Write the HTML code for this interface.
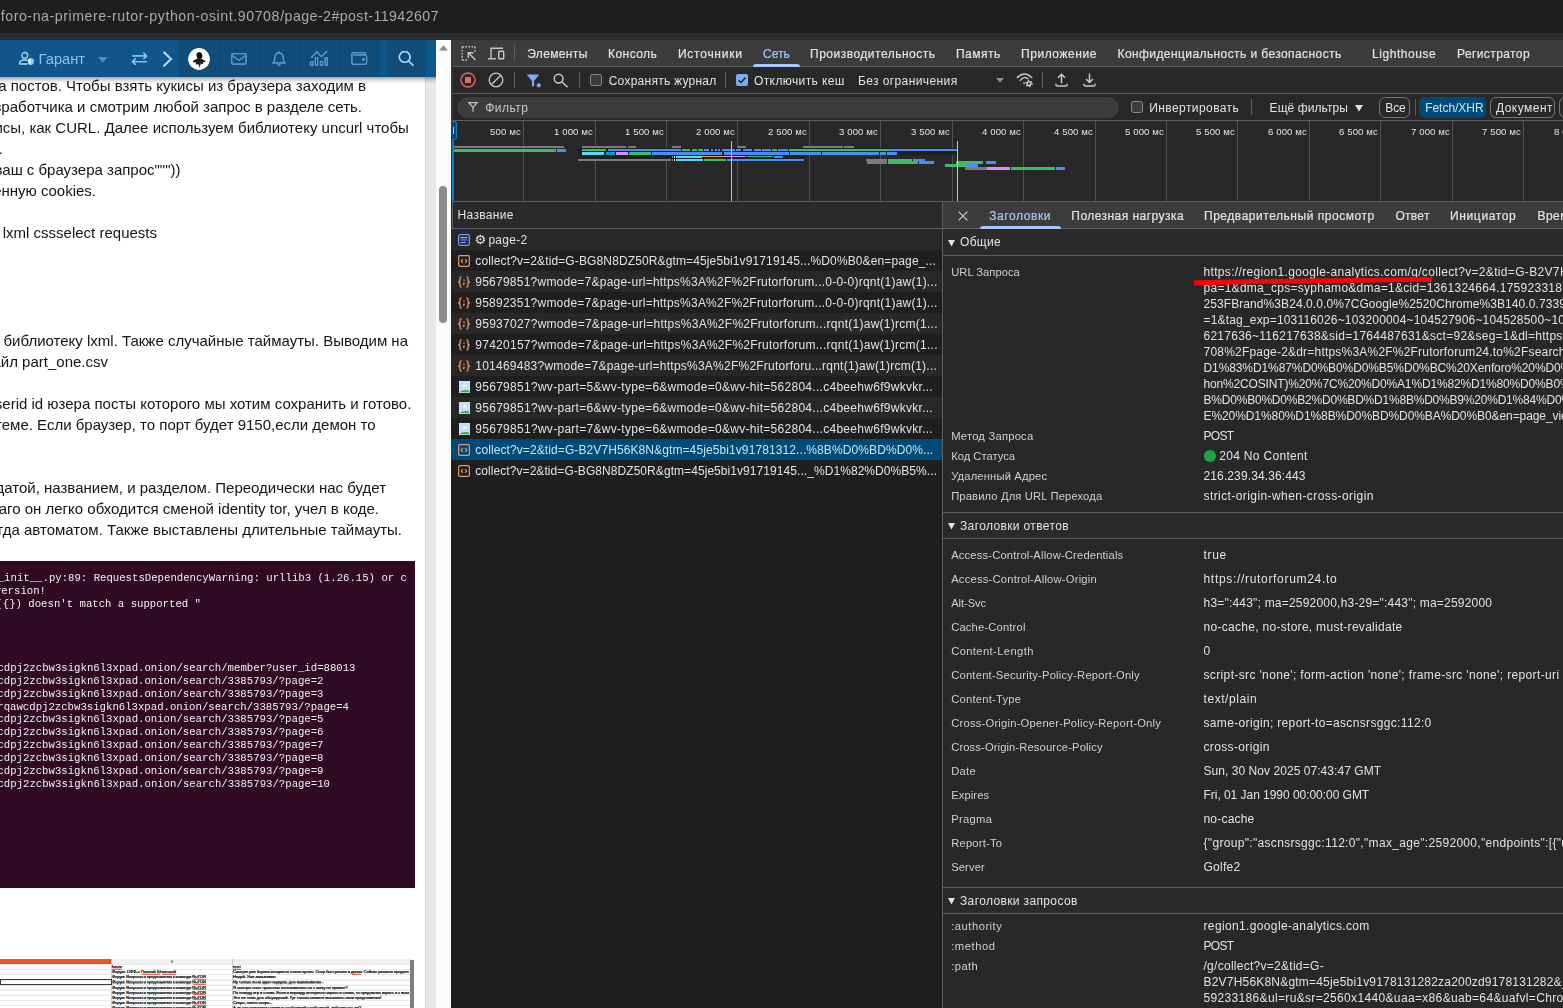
<!DOCTYPE html>
<html><head><meta charset="utf-8"><title>page</title>
<style>
html,body{margin:0;padding:0;}
body{width:1563px;height:1008px;overflow:hidden;position:relative;background:#282828;font-family:"Liberation Sans",sans-serif;}
#root{position:absolute;left:0;top:0;width:1563px;height:1008px;overflow:hidden;}
#root div,#root span,#root svg{position:absolute;}
#root span{white-space:pre;}
#tx{left:0;top:0;width:1563px;height:1008px;will-change:transform;}

</style></head><body><div id="root">
<div style="left:0px;top:0px;width:1563px;height:33px;background:#1e1e1e;"></div>
<div style="left:0px;top:33px;width:1563px;height:7px;background:#292c31;"></div>
<div style="left:0px;top:40px;width:452px;height:968px;background:#ffffff;"></div>
<div style="left:425.2px;top:77px;width:10.8px;height:931px;background:#e9e9e9;border-left:0.8px solid #d6d6d6;box-sizing:border-box;"></div>
<div style="left:435.9px;top:40px;width:15.5px;height:968px;background:#fcfcfc;"></div>
<div style="left:439.2px;top:186px;width:8.3px;height:136.6px;background:#8b8b8b;border-radius:4.2px;"></div>
<svg style="left:439px;top:44.9px" width="9" height="6" viewBox="0 0 9 6"><path d="M0 5.4 L4.45 0.3 L8.9 5.4Z" fill="#8b8b8b"/></svg>
<div style="left:0px;top:561px;width:415px;height:326.5px;background:#300a24;"></div>
<div style="left:0px;top:76.5px;width:436px;height:7px;background:transparent;background:linear-gradient(rgba(0,0,0,.36),rgba(0,0,0,.20) 30%,rgba(0,0,0,.07) 65%,rgba(0,0,0,0));"></div>
<div style="left:0px;top:40px;width:436px;height:36.5px;background:#0f568a;"></div>
<div style="left:178px;top:40px;width:201.5px;height:36.5px;background:#114d7a;"></div>
<div style="left:219px;top:40px;width:1px;height:36.5px;background:#0c456f;"></div>
<div style="left:259px;top:40px;width:1px;height:36.5px;background:#0c456f;"></div>
<div style="left:299px;top:40px;width:1px;height:36.5px;background:#0c456f;"></div>
<div style="left:339px;top:40px;width:1px;height:36.5px;background:#0c456f;"></div>
<div style="left:386.5px;top:40px;width:39.5px;height:36.5px;background:#114d7a;border-radius:4px 4px 0 0;"></div>
<div style="left:452px;top:40px;width:1111px;height:968px;background:#282828;"></div>
<div style="left:451.3px;top:40px;width:1.7px;height:162px;background:#383838;"></div>
<div style="left:451.3px;top:40px;width:1111.7px;height:26px;background:#3c3c3c;"></div>
<div style="left:453px;top:66px;width:1110px;height:1px;background:#5e5e5e;"></div>
<div style="left:453px;top:93px;width:1110px;height:1px;background:#5e5e5e;"></div>
<div style="left:457px;top:97px;width:662px;height:20.5px;background:#3c3c3c;border-radius:10.5px;"></div>
<div style="left:453px;top:120px;width:1110px;height:1px;background:#5e5e5e;"></div>
<div style="left:753px;top:64px;width:47px;height:3px;background:#a8c7fa;border-radius:3px 3px 0 0;"></div>
<div style="left:1379px;top:97px;width:31px;height:20.5px;background:transparent;border:1px solid #757575;box-sizing:border-box;border-radius:6px;"></div>
<div style="left:1419px;top:97px;width:67px;height:20.5px;background:#004a77;border-radius:6px;"></div>
<div style="left:1490px;top:97px;width:64.5px;height:20.5px;background:transparent;border:1px solid #757575;box-sizing:border-box;border-radius:6px;"></div>
<div style="left:1559px;top:97px;width:20px;height:20.5px;background:transparent;border:1px solid #757575;box-sizing:border-box;border-radius:6px;"></div>
<div style="left:514px;top:45px;width:1px;height:16px;background:#5e5e5e;"></div>
<div style="left:514px;top:72px;width:1px;height:16px;background:#5e5e5e;"></div>
<div style="left:579px;top:72px;width:1px;height:16px;background:#5e5e5e;"></div>
<div style="left:725px;top:72px;width:1px;height:16px;background:#5e5e5e;"></div>
<div style="left:1042px;top:72px;width:1px;height:16px;background:#5e5e5e;"></div>
<div style="left:1250.5px;top:99px;width:1px;height:16px;background:#5e5e5e;"></div>
<div style="left:1414.5px;top:99px;width:1px;height:16px;background:#5e5e5e;"></div>
<div style="left:590px;top:74px;width:12px;height:12px;background:#3c3c3c;border:1px solid #8f8f8f;box-sizing:border-box;border-radius:2.5px;"></div>
<svg style="left:736px;top:74px" width="12" height="12" viewBox="0 0 12 12"><rect width="12" height="12" rx="2" fill="#7cacf8"/><path d="M2.6 6.2 L4.9 8.5 L9.6 3.4" fill="none" stroke="#1f1f1f" stroke-width="1.5"/></svg>
<div style="left:1131px;top:101px;width:12px;height:12px;background:#3c3c3c;border:1px solid #8f8f8f;box-sizing:border-box;border-radius:2.5px;"></div>
<svg style="left:996px;top:78px" width="8" height="5" viewBox="0 0 8 5"><path d="M0 0 H8 L4 4.5Z" fill="#8f8f8f"/></svg>
<svg style="left:1354.5px;top:105px" width="8" height="7" viewBox="0 0 8 7"><path d="M0 0 H8 L4 6.5Z" fill="#e3e3e3"/></svg>
<svg style="left:460.6px;top:45.6px" width="16" height="15" viewBox="0 0 16 15" fill="none" stroke="#c7c7c7">
<path d="M1.2 0.8 H14 " stroke-width="1.4" stroke-dasharray="1.6 1.5"/>
<path d="M1.2 14 H6" stroke-width="1.4" stroke-dasharray="1.6 1.5"/>
<path d="M1.2 0.8 V14" stroke-width="1.4" stroke-dasharray="1.6 1.5"/>
<path d="M14 0.8 V6" stroke-width="1.4" stroke-dasharray="1.6 1.5"/>
<path d="M14.5 14 L7.3 6.8 M7.3 12 V6.8 H12.5" stroke-width="1.4"/></svg>
<svg style="left:488px;top:46.5px" width="17" height="13" viewBox="0 0 17 13" fill="none" stroke="#c7c7c7" stroke-width="1.4">
<path d="M3 11 V1.2 H15"/><path d="M0 11.8 H8"/><rect x="10.7" y="4.2" width="5" height="7.6" rx="0.8"/></svg>
<svg style="left:460px;top:72px" width="16" height="16" viewBox="0 0 16 16"><circle cx="8" cy="8" r="7" fill="none" stroke="#e46962" stroke-width="1.3"/><rect x="5" y="5" width="6" height="6" rx="0.6" fill="#e46962"/></svg>
<svg style="left:488px;top:72px" width="16" height="16" viewBox="0 0 16 16" fill="none" stroke="#c7c7c7" stroke-width="1.3"><circle cx="8" cy="8" r="6.8"/><path d="M3.2 12.8 L12.8 3.2"/></svg>
<svg style="left:526px;top:73.5px" width="16" height="14" viewBox="0 0 16 14"><path d="M0.8 0.5 H13.2 L8.1 7 V12.3 H5.9 V7Z" fill="#7cacf8"/><circle cx="12.8" cy="11.3" r="2.1" fill="#7cacf8"/></svg>
<svg style="left:553px;top:73px" width="16" height="15" viewBox="0 0 16 15" fill="none" stroke="#c7c7c7" stroke-width="1.5"><circle cx="5.6" cy="5.6" r="4.4"/><path d="M8.8 8.8 L14.6 14.2"/></svg>
<svg style="left:468px;top:102px" width="10" height="10" viewBox="0 0 10 10" fill="none" stroke="#c7c7c7" stroke-width="1.2"><path d="M0.8 0.7 H9.2 L5 5.4 Z M5 5.4 V9.8"/></svg>
<svg style="left:1015.5px;top:72.5px" width="18" height="15" viewBox="0 0 18 15" fill="none" stroke="#c7c7c7" stroke-width="1.4">
<path d="M0.8 4.9 Q8.5 -2.8 16.2 4.9"/><path d="M3.8 7.7 Q8.3 2.2 12.4 6.2"/><path d="M6.6 10 L8.6 9 V11.6Z" fill="#c7c7c7" stroke="none"/>
<circle cx="13" cy="10.6" r="1.9" stroke-width="1.5"/><circle cx="13" cy="10.6" r="3.1" stroke-width="1.3" stroke-dasharray="1.5 1.75"/></svg>
<svg style="left:1054.5px;top:72.5px" width="13" height="14" viewBox="0 0 13 14" fill="none" stroke="#c7c7c7" stroke-width="1.5"><path d="M6.5 10.2 V1.4 M3 4.8 L6.5 1.3 L10 4.8"/><path d="M0.9 10.8 V11.4 Q0.9 13 2.5 13 H10.5 Q12.1 13 12.1 11.4 V10.8"/></svg>
<svg style="left:1082.5px;top:72.5px" width="13" height="14" viewBox="0 0 13 14" fill="none" stroke="#c7c7c7" stroke-width="1.5"><path d="M6.5 0.6 V9.4 M3 6 L6.5 9.5 L10 6"/><path d="M0.9 10.8 V11.4 Q0.9 13 2.5 13 H10.5 Q12.1 13 12.1 11.4 V10.8"/></svg>
<div style="left:453px;top:121px;width:1110px;height:80px;background:#282828;"></div>
<div style="left:523px;top:121px;width:1px;height:80px;background:#525252;"></div>
<div style="left:595px;top:121px;width:1px;height:80px;background:#525252;"></div>
<div style="left:666px;top:121px;width:1px;height:80px;background:#525252;"></div>
<div style="left:737px;top:121px;width:1px;height:80px;background:#525252;"></div>
<div style="left:809px;top:121px;width:1px;height:80px;background:#525252;"></div>
<div style="left:880px;top:121px;width:1px;height:80px;background:#525252;"></div>
<div style="left:952px;top:121px;width:1px;height:80px;background:#525252;"></div>
<div style="left:1023px;top:121px;width:1px;height:80px;background:#525252;"></div>
<div style="left:1095px;top:121px;width:1px;height:80px;background:#525252;"></div>
<div style="left:1166px;top:121px;width:1px;height:80px;background:#525252;"></div>
<div style="left:1237px;top:121px;width:1px;height:80px;background:#525252;"></div>
<div style="left:1309px;top:121px;width:1px;height:80px;background:#525252;"></div>
<div style="left:1380px;top:121px;width:1px;height:80px;background:#525252;"></div>
<div style="left:1452px;top:121px;width:1px;height:80px;background:#525252;"></div>
<div style="left:1523px;top:121px;width:1px;height:80px;background:#525252;"></div>
<div style="left:453px;top:201px;width:1110px;height:1px;background:#5e5e5e;"></div>
<div style="left:577.5px;top:148.4px;width:380px;height:6.9px;background:#1f1f1f;"></div>
<div style="left:577.5px;top:155.2px;width:227px;height:6.2px;background:#1f1f1f;"></div>
<div style="left:453.6px;top:146.1px;width:110.2px;height:2px;background:#7c7c7c;"></div>
<div style="left:582px;top:146.1px;width:43.5px;height:2px;background:#7c7c7c;"></div>
<div style="left:627.5px;top:146.1px;width:8.5px;height:2px;background:#7c7c7c;"></div>
<div style="left:672px;top:146.1px;width:9px;height:2px;background:#7c7c7c;"></div>
<div style="left:737.6px;top:146.1px;width:8.4px;height:2px;background:#7c7c7c;"></div>
<div style="left:802.5px;top:146.1px;width:40.5px;height:2px;background:#7c7c7c;"></div>
<div style="left:843.8px;top:146.1px;width:10.2px;height:2px;background:#7c7c7c;"></div>
<div style="left:453.6px;top:149px;width:102.4px;height:2.9px;background:#3cbd63;"></div>
<div style="left:557px;top:149px;width:9px;height:2.9px;background:#4b8cf5;"></div>
<div style="left:582px;top:149.1px;width:23.6px;height:2.3px;background:#3cbd63;"></div>
<div style="left:607.5px;top:149.1px;width:73.5px;height:2.3px;background:#4b8cf5;"></div>
<div style="left:682px;top:149.1px;width:8px;height:2.3px;background:#3cbd63;"></div>
<div style="left:691.5px;top:149.1px;width:5.5px;height:2.3px;background:#3cbd63;"></div>
<div style="left:698px;top:149.1px;width:5px;height:2.3px;background:#3cbd63;"></div>
<div style="left:704px;top:149.1px;width:5px;height:2.3px;background:#4b8cf5;"></div>
<div style="left:710.5px;top:149.1px;width:2.5px;height:2.3px;background:#4b8cf5;"></div>
<div style="left:714.5px;top:149.1px;width:2.5px;height:2.3px;background:#4b8cf5;"></div>
<div style="left:718px;top:149.1px;width:2px;height:2.3px;background:#4b8cf5;"></div>
<div style="left:722px;top:149.1px;width:13px;height:2.3px;background:#4b8cf5;"></div>
<div style="left:736px;top:149.1px;width:5px;height:2.3px;background:#4b8cf5;"></div>
<div style="left:742.5px;top:149.1px;width:9.5px;height:2.3px;background:#4b8cf5;"></div>
<div style="left:753.5px;top:149.1px;width:7.5px;height:2.3px;background:#4b8cf5;"></div>
<div style="left:762px;top:149.1px;width:9px;height:2.3px;background:#4b8cf5;"></div>
<div style="left:771.5px;top:149.1px;width:5.5px;height:2.3px;background:#3cbd63;"></div>
<div style="left:778px;top:149.1px;width:10px;height:2.3px;background:#4b8cf5;"></div>
<div style="left:789px;top:149.1px;width:97.5px;height:2.3px;background:#3cbd63;"></div>
<div style="left:886.8px;top:149.1px;width:70.2px;height:2.3px;background:#4b8cf5;"></div>
<div style="left:582px;top:152.3px;width:22px;height:2.5px;background:#5cd3f8;"></div>
<div style="left:605.6px;top:152.3px;width:9.4px;height:2.5px;background:#08a0c0;"></div>
<div style="left:616px;top:152.3px;width:12px;height:2.5px;background:#dc8ff8;"></div>
<div style="left:628.7px;top:152.3px;width:22.3px;height:2.5px;background:#3cbd63;"></div>
<div style="left:651.8px;top:152.3px;width:70.2px;height:2.5px;background:#4b8cf5;"></div>
<div style="left:724px;top:152.3px;width:65px;height:2.5px;background:#4b8cf5;"></div>
<div style="left:790px;top:152.3px;width:31px;height:2.5px;background:#4b8cf5;"></div>
<div style="left:822px;top:152.3px;width:56.7px;height:2.5px;background:#4b8cf5;"></div>
<div style="left:879.6px;top:152.3px;width:6.4px;height:2.5px;background:#4b8cf5;"></div>
<div style="left:886.8px;top:152.3px;width:10.4px;height:2.5px;background:#4b8cf5;"></div>
<div style="left:676px;top:155.8px;width:25.6px;height:1.9px;background:#5cd3f8;"></div>
<div style="left:774px;top:155.8px;width:9px;height:1.9px;background:#4b8cf5;"></div>
<div style="left:702px;top:156.0px;width:21.5px;height:1.3px;background:#e9a600;"></div>
<div style="left:724px;top:156.0px;width:22px;height:1.3px;background:#dc8ff8;"></div>
<div style="left:747px;top:156.0px;width:26px;height:1.3px;background:#3cbd63;"></div>
<div style="left:578px;top:158.6px;width:93px;height:2.3px;background:#7c7c7c;"></div>
<div style="left:676px;top:158.6px;width:27px;height:2.3px;background:#5cd3f8;"></div>
<div style="left:704px;top:158.6px;width:22px;height:2.3px;background:#3cbd63;"></div>
<div style="left:727px;top:158.6px;width:76.6px;height:2.3px;background:#4b8cf5;"></div>
<div style="left:866px;top:158.6px;width:20.8px;height:2.3px;background:#7c7c7c;"></div>
<div style="left:888.3px;top:158.6px;width:23.7px;height:2.3px;background:#3cbd63;"></div>
<div style="left:912.8px;top:158.6px;width:12.2px;height:2.3px;background:#4b8cf5;"></div>
<div style="left:674.2px;top:155.8px;width:1.1px;height:2.1px;background:#f0f0f0;"></div>
<div style="left:672px;top:155.8px;width:0.6px;height:2.1px;background:#8a8a8a;"></div>
<div style="left:674.2px;top:158.6px;width:1.1px;height:2.1px;background:#f0f0f0;"></div>
<div style="left:672px;top:158.6px;width:0.6px;height:2.1px;background:#8a8a8a;"></div>
<div style="left:867px;top:161.0px;width:19.8px;height:2.6px;background:#7c7c7c;"></div>
<div style="left:888.3px;top:161.0px;width:30.1px;height:2.6px;background:#3cbd63;"></div>
<div style="left:919.3px;top:161.0px;width:15.0px;height:2.6px;background:#4b8cf5;"></div>
<div style="left:955.7px;top:161.0px;width:27.3px;height:2.6px;background:#3cbd63;"></div>
<div style="left:985.7px;top:161.0px;width:9.9px;height:2.6px;background:#4b8cf5;"></div>
<div style="left:945px;top:164.2px;width:22.7px;height:2.6px;background:#3cbd63;"></div>
<div style="left:968px;top:164.2px;width:9.8px;height:2.6px;background:#4b8cf5;"></div>
<div style="left:965px;top:167.1px;width:21.7px;height:2.6px;background:#7c7c7c;"></div>
<div style="left:987.2px;top:167.1px;width:22.7px;height:2.6px;background:#dc8ff8;"></div>
<div style="left:1010.8px;top:167.1px;width:44.2px;height:2.6px;background:#3cbd63;"></div>
<div style="left:1055.9px;top:167.1px;width:9.1px;height:2.6px;background:#4b8cf5;"></div>
<div style="left:731px;top:141px;width:1.3px;height:60px;background:#a8c7fa;"></div>
<div style="left:956.8px;top:141px;width:1.3px;height:60px;background:#f2b8b5;"></div>
<div style="left:452px;top:121px;width:2px;height:80px;background:#0b7ec2;"></div>
<div style="left:452px;top:121px;width:5px;height:19px;background:#004a77;border:1px solid #0b7ec2;border-left:0;box-sizing:border-box;border-radius:0 3px 3px 0;"></div>
<div style="left:453px;top:127.2px;width:1px;height:6.8px;background:#a8c7fa;"></div>
<div style="left:451.4px;top:202px;width:490.6px;height:26px;background:#292a2c;"></div>
<div style="left:451.4px;top:228px;width:490.6px;height:1px;background:#5e5e5e;"></div>
<div style="left:452.4px;top:202px;width:1px;height:26px;background:#5e5e5e;"></div>
<div style="left:451.4px;top:229px;width:490.6px;height:21px;background:#282828;"></div>
<svg style="left:458px;top:233.5px" width="12" height="12" viewBox="0 0 12 12"><rect x="0.65" y="0.65" width="10.7" height="10.7" rx="1.7" fill="#1d2a45" stroke="#6e9ae0" stroke-width="1.3"/><path d="M2.6 3.6 H9.2 M2.6 8.5 H7.6" stroke="#8ab4f8" stroke-width="1.1"/><path d="M2.6 6 H9.2" stroke="#5f8bd6" stroke-width="1.2"/></svg>
<div style="left:451.4px;top:250px;width:490.6px;height:21px;background:#1f1f1f;"></div>
<svg style="left:458px;top:254.5px" width="12" height="12" viewBox="0 0 12 12" fill="none"><rect x="0.6" y="0.6" width="10.8" height="10.8" rx="1.6" stroke="#e8956a" stroke-width="1.2"/><path d="M4.8 4.2 L3.2 6 L4.8 7.8 M7.2 4.2 L8.8 6 L7.2 7.8" stroke="#e8956a" stroke-width="1.2"/></svg>
<div style="left:451.4px;top:271px;width:490.6px;height:21px;background:#282828;"></div>
<svg style="left:457px;top:275.5px" width="14" height="12" viewBox="0 0 14 12" fill="none" stroke="#e8956a" stroke-width="1.3"><path d="M4.6 0.8 Q3 0.8 3 2.4 V4 Q3 6 1.2 6 Q3 6 3 8 V9.6 Q3 11.2 4.6 11.2"/><path d="M9.4 0.8 Q11 0.8 11 2.4 V4 Q11 6 12.8 6 Q11 6 11 8 V9.6 Q11 11.2 9.4 11.2"/><path d="M7 3.4 V4.8 M7 6.6 V7.6 L6.4 9" stroke-width="1.4"/></svg>
<div style="left:451.4px;top:292px;width:490.6px;height:21px;background:#1f1f1f;"></div>
<svg style="left:457px;top:296.5px" width="14" height="12" viewBox="0 0 14 12" fill="none" stroke="#e8956a" stroke-width="1.3"><path d="M4.6 0.8 Q3 0.8 3 2.4 V4 Q3 6 1.2 6 Q3 6 3 8 V9.6 Q3 11.2 4.6 11.2"/><path d="M9.4 0.8 Q11 0.8 11 2.4 V4 Q11 6 12.8 6 Q11 6 11 8 V9.6 Q11 11.2 9.4 11.2"/><path d="M7 3.4 V4.8 M7 6.6 V7.6 L6.4 9" stroke-width="1.4"/></svg>
<div style="left:451.4px;top:313px;width:490.6px;height:21px;background:#282828;"></div>
<svg style="left:457px;top:317.5px" width="14" height="12" viewBox="0 0 14 12" fill="none" stroke="#e8956a" stroke-width="1.3"><path d="M4.6 0.8 Q3 0.8 3 2.4 V4 Q3 6 1.2 6 Q3 6 3 8 V9.6 Q3 11.2 4.6 11.2"/><path d="M9.4 0.8 Q11 0.8 11 2.4 V4 Q11 6 12.8 6 Q11 6 11 8 V9.6 Q11 11.2 9.4 11.2"/><path d="M7 3.4 V4.8 M7 6.6 V7.6 L6.4 9" stroke-width="1.4"/></svg>
<div style="left:451.4px;top:334px;width:490.6px;height:21px;background:#1f1f1f;"></div>
<svg style="left:457px;top:338.5px" width="14" height="12" viewBox="0 0 14 12" fill="none" stroke="#e8956a" stroke-width="1.3"><path d="M4.6 0.8 Q3 0.8 3 2.4 V4 Q3 6 1.2 6 Q3 6 3 8 V9.6 Q3 11.2 4.6 11.2"/><path d="M9.4 0.8 Q11 0.8 11 2.4 V4 Q11 6 12.8 6 Q11 6 11 8 V9.6 Q11 11.2 9.4 11.2"/><path d="M7 3.4 V4.8 M7 6.6 V7.6 L6.4 9" stroke-width="1.4"/></svg>
<div style="left:451.4px;top:355px;width:490.6px;height:21px;background:#282828;"></div>
<svg style="left:457px;top:359.5px" width="14" height="12" viewBox="0 0 14 12" fill="none" stroke="#e8956a" stroke-width="1.3"><path d="M4.6 0.8 Q3 0.8 3 2.4 V4 Q3 6 1.2 6 Q3 6 3 8 V9.6 Q3 11.2 4.6 11.2"/><path d="M9.4 0.8 Q11 0.8 11 2.4 V4 Q11 6 12.8 6 Q11 6 11 8 V9.6 Q11 11.2 9.4 11.2"/><path d="M7 3.4 V4.8 M7 6.6 V7.6 L6.4 9" stroke-width="1.4"/></svg>
<div style="left:451.4px;top:376px;width:490.6px;height:21px;background:#1f1f1f;"></div>
<svg style="left:459px;top:380.5px" width="11" height="12" viewBox="0 0 11 12"><rect x="0.4" y="0.4" width="10.2" height="11.2" fill="#c8dcf8" stroke="#f1f3f4" stroke-width="0.8"/><path d="M3.2 5.6 Q3.4 3.4 5.6 3.2 Q7.8 3.4 8 5.6 Z" fill="#fff"/><path d="M0.8 11.2 V10.8 Q5 8 10.2 9.6 V11.2Z" fill="#34a853"/></svg>
<div style="left:451.4px;top:397px;width:490.6px;height:21px;background:#282828;"></div>
<svg style="left:459px;top:401.5px" width="11" height="12" viewBox="0 0 11 12"><rect x="0.4" y="0.4" width="10.2" height="11.2" fill="#c8dcf8" stroke="#f1f3f4" stroke-width="0.8"/><path d="M3.2 5.6 Q3.4 3.4 5.6 3.2 Q7.8 3.4 8 5.6 Z" fill="#fff"/><path d="M0.8 11.2 V10.8 Q5 8 10.2 9.6 V11.2Z" fill="#34a853"/></svg>
<div style="left:451.4px;top:418px;width:490.6px;height:21px;background:#1f1f1f;"></div>
<svg style="left:459px;top:422.5px" width="11" height="12" viewBox="0 0 11 12"><rect x="0.4" y="0.4" width="10.2" height="11.2" fill="#c8dcf8" stroke="#f1f3f4" stroke-width="0.8"/><path d="M3.2 5.6 Q3.4 3.4 5.6 3.2 Q7.8 3.4 8 5.6 Z" fill="#fff"/><path d="M0.8 11.2 V10.8 Q5 8 10.2 9.6 V11.2Z" fill="#34a853"/></svg>
<div style="left:451.4px;top:439px;width:490.6px;height:21px;background:#004a77;"></div>
<svg style="left:458px;top:443.5px" width="12" height="12" viewBox="0 0 12 12" fill="none"><rect x="0.6" y="0.6" width="10.8" height="10.8" rx="1.6" stroke="#e8956a" stroke-width="1.2"/><path d="M4.8 4.2 L3.2 6 L4.8 7.8 M7.2 4.2 L8.8 6 L7.2 7.8" stroke="#e8956a" stroke-width="1.2"/></svg>
<div style="left:451.4px;top:460px;width:490.6px;height:21px;background:#1f1f1f;"></div>
<svg style="left:458px;top:464.5px" width="12" height="12" viewBox="0 0 12 12" fill="none"><rect x="0.6" y="0.6" width="10.8" height="10.8" rx="1.6" stroke="#e8956a" stroke-width="1.2"/><path d="M4.8 4.2 L3.2 6 L4.8 7.8 M7.2 4.2 L8.8 6 L7.2 7.8" stroke="#e8956a" stroke-width="1.2"/></svg>
<div style="left:451.4px;top:481px;width:490.6px;height:527px;background:#1f1f1f;"></div>
<div style="left:942px;top:202px;width:1px;height:806px;background:#5e5e5e;"></div>
<div style="left:943px;top:202px;width:620px;height:26px;background:#3c3c3c;"></div>
<div style="left:943px;top:228px;width:620px;height:1px;background:#5e5e5e;"></div>
<div style="left:943px;top:229px;width:620px;height:779px;background:#282828;"></div>
<svg style="left:958px;top:210.5px" width="10" height="10" viewBox="0 0 10 10" stroke="#c7c7c7" stroke-width="1.3"><path d="M0.6 0.6 L9.4 9.4 M9.4 0.6 L0.6 9.4"/></svg>
<div style="left:979.5px;top:225.5px;width:81.5px;height:3px;background:#a8c7fa;border-radius:3px 3px 0 0;"></div>
<div style="left:943px;top:229.5px;width:620px;height:25px;background:#2b2b2d;"></div>
<div style="left:943px;top:254.5px;width:620px;height:1px;background:#5e5e5e;"></div>
<svg style="left:948.3px;top:239.7px" width="7" height="7" viewBox="0 0 7 7"><path d="M0 0 H7 L3.5 6.6Z" fill="#e3e3e3"/></svg>
<div style="left:943px;top:512px;width:620px;height:1px;background:#5e5e5e;"></div>
<div style="left:943px;top:513px;width:620px;height:25px;background:#2b2b2d;"></div>
<div style="left:943px;top:538px;width:620px;height:1px;background:#5e5e5e;"></div>
<svg style="left:948.3px;top:523.2px" width="7" height="7" viewBox="0 0 7 7"><path d="M0 0 H7 L3.5 6.6Z" fill="#e3e3e3"/></svg>
<div style="left:943px;top:887px;width:620px;height:1px;background:#5e5e5e;"></div>
<div style="left:943px;top:888px;width:620px;height:25px;background:#2b2b2d;"></div>
<div style="left:943px;top:913px;width:620px;height:1px;background:#5e5e5e;"></div>
<svg style="left:948.3px;top:898.2px" width="7" height="7" viewBox="0 0 7 7"><path d="M0 0 H7 L3.5 6.6Z" fill="#e3e3e3"/></svg>
<div style="left:1203.5px;top:450px;width:12px;height:12px;background:#1ea446;border-radius:6px;"></div>
<svg style="left:18px;top:51px" width="18" height="16" viewBox="0 0 18 16" fill="none" stroke="#8fc1ea" stroke-width="1.3">
<circle cx="6.8" cy="4.4" r="2.9"/><path d="M1.4 13 Q1.4 9 6.8 9 Q8.6 9 9.8 9.6 M1.4 13 H9.6"/>
<path d="M13 7.2 L16 8.2 V10.4 Q16 12.8 13 14 Q10 12.8 10 10.4 V8.2Z" fill="#8fc1ea" stroke="none"/><path d="M13 7.2 V14 Q10 12.8 10 10.4 V8.2Z" fill="#cfe6f8" stroke="none"/></svg>
<svg style="left:98px;top:56.5px" width="10" height="6" viewBox="0 0 10 6"><path d="M0 0 H9.4 L4.7 5.4Z" fill="#4f8fc4"/></svg>
<svg style="left:131px;top:52px" width="17" height="13" viewBox="0 0 17 13" fill="none" stroke="#8fc1ea" stroke-width="1.3"><path d="M1.5 3.9 H15.6 M12.4 0.8 L15.6 3.9 L12.4 7"/><path d="M15.5 9.6 H1.4 M4.6 6.5 L1.4 9.6 L4.6 12.7"/></svg>
<svg style="left:162px;top:51px" width="11" height="16" viewBox="0 0 11 16" fill="none" stroke="#a9d3f5" stroke-width="1.9"><path d="M1.6 1 L9 8.1 L1.6 15.2"/></svg>
<svg style="left:187.5px;top:47.5px" width="22" height="22" viewBox="0 0 22 22"><circle cx="11" cy="11" r="10.7" fill="#fff"/>
<ellipse cx="11.4" cy="7.6" rx="2.9" ry="3.5" fill="#0a0a0a" transform="rotate(-12 11.4 7.6)"/>
<path d="M11 9.4 L16.6 12.4 L17.6 14 L15 14.2 L15.2 16 L12.8 15.8 L11.6 20 L10.6 16.2 L8 16.6 L8 14.6 L4.4 14 L5.6 12.4Z" fill="#1c1c1c"/></svg>
<svg style="left:231px;top:52.5px" width="16" height="12" viewBox="0 0 16 12" fill="none" stroke="#5a96c8" stroke-width="1.2"><rect x="0.7" y="0.7" width="14.4" height="10.4" rx="1.4"/><path d="M1 2.6 L7.9 7.2 L14.8 2.6"/></svg>
<svg style="left:271.5px;top:50.5px" width="14" height="16" viewBox="0 0 14 16" fill="none" stroke="#5a96c8" stroke-width="1.2"><path d="M7 1.8 Q11.2 2.2 11.2 7 Q11.2 10.2 12.8 11.8 H1.2 Q2.8 10.2 2.8 7 Q2.8 2.2 7 1.8Z M7 0.4 V1.8"/><path d="M5.6 13.4 Q7 15 8.4 13.4" stroke-width="1.4"/></svg>
<svg style="left:309px;top:50px" width="20" height="17" viewBox="0 0 20 17" fill="none" stroke="#5a96c8" stroke-width="1.2"><path d="M2.7 7.2 L7.7 1.8 L12.4 6.7 L17.4 1.7"/><circle cx="2.7" cy="7.2" r="0.9" fill="#5a96c8" stroke="none"/><circle cx="7.7" cy="1.8" r="0.9" fill="#5a96c8" stroke="none"/><circle cx="17.4" cy="1.7" r="0.9" fill="#5a96c8" stroke="none"/><rect x="1.5" y="11.6" width="2.4" height="3.8" rx="0.6"/><rect x="6.4" y="7.6" width="2.2" height="7.8" rx="0.6"/><rect x="11.4" y="11.4" width="2.2" height="4" rx="0.6"/><rect x="16.1" y="7.6" width="2.2" height="7.8" rx="0.6"/></svg>
<svg style="left:351px;top:52px" width="17" height="13" viewBox="0 0 17 13" fill="none" stroke="#5a96c8" stroke-width="1.2"><path d="M14 2.6 V1.4 Q14 0.7 13.2 0.7 H2.4 Q0.8 0.7 0.8 2.4 V10.6 Q0.8 12.3 2.4 12.3 H14 Q15.6 12.3 15.6 10.6 V4.4 Q15.6 2.8 14 2.8 H2.4"/><circle cx="12.6" cy="7.6" r="0.8" fill="#5a96c8"/></svg>
<svg style="left:397.8px;top:51px" width="17" height="16" viewBox="0 0 17 16" fill="none" stroke="#a9d3f5" stroke-width="1.4"><circle cx="6.7" cy="6" r="5.4"/><path d="M10.6 9.9 L15.4 14.7"/></svg>
<div style="left:0;top:959px;width:962px;height:120px;transform-origin:0 0;transform:scale(0.43);overflow:hidden;"><div style="left:0px;top:0px;width:258.4px;height:11.6px;background:#e95420;"></div><div style="left:258.4px;top:0px;width:703px;height:11.6px;background:#efefef;"></div><div style="left:0px;top:11.2px;width:962px;height:1px;background:#e6e6e6;"></div><div style="left:0px;top:23.2px;width:962px;height:1px;background:#e6e6e6;"></div><div style="left:0px;top:35.2px;width:962px;height:1px;background:#e6e6e6;"></div><div style="left:0px;top:47.2px;width:962px;height:1px;background:#e6e6e6;"></div><div style="left:0px;top:59.2px;width:962px;height:1px;background:#e6e6e6;"></div><div style="left:0px;top:71.2px;width:962px;height:1px;background:#e6e6e6;"></div><div style="left:0px;top:83.2px;width:962px;height:1px;background:#e6e6e6;"></div><div style="left:0px;top:95.2px;width:962px;height:1px;background:#e6e6e6;"></div><div style="left:0px;top:107.2px;width:962px;height:1px;background:#e6e6e6;"></div><div style="left:0px;top:119.2px;width:962px;height:1px;background:#e6e6e6;"></div><div style="left:258.4px;top:0px;width:1px;height:120px;background:#d0d0d0;"></div><div style="left:540.4px;top:0px;width:1px;height:120px;background:#d0d0d0;"></div><div style="left:0px;top:47.2px;width:259.5px;height:13px;background:transparent;border:1.5px solid #333;box-sizing:border-box;"></div><div style="left:257px;top:58px;width:4px;height:4px;background:#222;"></div><div style="left:954px;top:2px;width:6px;height:118px;background:#777;"></div><div style="left:448px;top:46.2px;width:31px;height:1.2px;background:#ea6a62;"></div><div style="left:448px;top:58.2px;width:31px;height:1.2px;background:#ea6a62;"></div><div style="left:448px;top:70.2px;width:31px;height:1.2px;background:#ea6a62;"></div><div style="left:448px;top:82.2px;width:31px;height:1.2px;background:#ea6a62;"></div><div style="left:448px;top:94.2px;width:31px;height:1.2px;background:#ea6a62;"></div><div style="left:448px;top:106.2px;width:31px;height:1.2px;background:#ea6a62;"></div><div style="left:448px;top:118.2px;width:31px;height:1.2px;background:#ea6a62;"></div><div style="left:260.5px;top:22.2px;width:23px;height:1.2px;background:#ea6a62;"></div><div style="left:542px;top:22.2px;width:18px;height:1.2px;background:#ea6a62;"></div><div style="left:330px;top:34.2px;width:42px;height:1.2px;background:#ea6a62;"></div><div style="left:377px;top:34.2px;width:33px;height:1.2px;background:#ea6a62;"></div><div style="left:818px;top:34.2px;width:21px;height:1.2px;background:#ea6a62;"></div><span style="left:396px;top:-1.00px;font-size:9px;line-height:14px;letter-spacing:0.000px;color:#555;">B</span>
<span style="left:260.5px;top:10.00px;font-size:10px;line-height:15px;letter-spacing:-0.461px;color:#2a2a2a;">forum</span>
<span style="left:542px;top:10.00px;font-size:10px;line-height:15px;letter-spacing:0.620px;color:#2a2a2a;">text</span>
<span style="left:260.5px;top:22.00px;font-size:10px;line-height:15px;letter-spacing:-0.228px;color:#2a2a2a;">Форум: ОФФ-с Пьяный Шпонской</span>
<span style="left:542px;top:22.00px;font-size:10px;line-height:15px;letter-spacing:-0.403px;color:#2a2a2a;">Смотрю уже борета конкретно стали путать. Спор был решен в диназ. Сейчас решили продолт</span>
<span style="left:260.5px;top:34.00px;font-size:10px;line-height:15px;letter-spacing:-0.400px;color:#2a2a2a;">Форум: Вопросы и предложения к команде RuTOR</span>
<span style="left:542px;top:34.00px;font-size:10px;line-height:15px;letter-spacing:-0.378px;color:#2a2a2a;">Недай. Уже заказываю</span>
<span style="left:260.5px;top:46.00px;font-size:10px;line-height:15px;letter-spacing:-0.400px;color:#2a2a2a;">Форум: Вопросы и предложения к команде RuTOR</span>
<span style="left:542px;top:46.00px;font-size:10px;line-height:15px;letter-spacing:-0.422px;color:#2a2a2a;">Ну только если один подарок, для замазывания...</span>
<span style="left:260.5px;top:58.00px;font-size:10px;line-height:15px;letter-spacing:-0.400px;color:#2a2a2a;">Форум: Вопросы и предложения к команде RuTOR</span>
<span style="left:542px;top:58.00px;font-size:10px;line-height:15px;letter-spacing:-0.320px;color:#2a2a2a;">Я смотрю опыт прошлых пользователь ни с чему не привел?</span>
<span style="left:260.5px;top:70.00px;font-size:10px;line-height:15px;letter-spacing:-0.400px;color:#2a2a2a;">Форум: Вопросы и предложения к команде RuTOR</span>
<span style="left:542px;top:70.00px;font-size:10px;line-height:15px;letter-spacing:-0.365px;color:#2a2a2a;">По поводу игр в слова. Если и вправду интересно играть в слова, то предлагаю играть и с вым</span>
<span style="left:260.5px;top:82.00px;font-size:10px;line-height:15px;letter-spacing:-0.400px;color:#2a2a2a;">Форум: Вопросы и предложения к команде RuTOR</span>
<span style="left:542px;top:82.00px;font-size:10px;line-height:15px;letter-spacing:-0.317px;color:#2a2a2a;">Это не тема для обсуждений. Тут только можете высказать свои предложения!</span>
<span style="left:260.5px;top:94.00px;font-size:10px;line-height:15px;letter-spacing:-0.400px;color:#2a2a2a;">Форум: Вопросы и предложения к команде RuTOR</span>
<span style="left:542px;top:94.00px;font-size:10px;line-height:15px;letter-spacing:-0.297px;color:#2a2a2a;">Скоро, очень скоро...</span>
<span style="left:260.5px;top:106.00px;font-size:10px;line-height:15px;letter-spacing:-0.400px;color:#2a2a2a;">Форум: Вопросы и предложения к команде RuTOR</span>
<span style="left:542px;top:106.00px;font-size:10px;line-height:15px;letter-spacing:-0.244px;color:#2a2a2a;">А за что положены такие в сообщений сообщений, забыли что-ли?</span></div>
<svg style="left:18px;top:51px" width="18" height="16" viewBox="0 0 18 16" fill="none" stroke="#8fc1ea" stroke-width="1.3">
<circle cx="6.8" cy="4.4" r="2.9"/><path d="M1.4 13 Q1.4 9 6.8 9 Q8.6 9 9.8 9.6 M1.4 13 H9.6"/>
<path d="M13 7.2 L16 8.2 V10.4 Q16 12.8 13 14 Q10 12.8 10 10.4 V8.2Z" fill="#8fc1ea" stroke="none"/><path d="M13 7.2 V14 Q10 12.8 10 10.4 V8.2Z" fill="#cfe6f8" stroke="none"/></svg>
<svg style="left:98px;top:56.5px" width="10" height="6" viewBox="0 0 10 6"><path d="M0 0 H9.4 L4.7 5.4Z" fill="#4f8fc4"/></svg>
<svg style="left:131px;top:52px" width="17" height="13" viewBox="0 0 17 13" fill="none" stroke="#8fc1ea" stroke-width="1.3"><path d="M1.5 3.9 H15.6 M12.4 0.8 L15.6 3.9 L12.4 7"/><path d="M15.5 9.6 H1.4 M4.6 6.5 L1.4 9.6 L4.6 12.7"/></svg>
<svg style="left:162px;top:51px" width="11" height="16" viewBox="0 0 11 16" fill="none" stroke="#a9d3f5" stroke-width="1.9"><path d="M1.6 1 L9 8.1 L1.6 15.2"/></svg>
<svg style="left:187.5px;top:47.5px" width="22" height="22" viewBox="0 0 22 22"><circle cx="11" cy="11" r="10.7" fill="#fff"/>
<ellipse cx="11.4" cy="7.6" rx="2.9" ry="3.5" fill="#0a0a0a" transform="rotate(-12 11.4 7.6)"/>
<path d="M11 9.4 L16.6 12.4 L17.6 14 L15 14.2 L15.2 16 L12.8 15.8 L11.6 20 L10.6 16.2 L8 16.6 L8 14.6 L4.4 14 L5.6 12.4Z" fill="#1c1c1c"/></svg>
<svg style="left:231px;top:52.5px" width="16" height="12" viewBox="0 0 16 12" fill="none" stroke="#5a96c8" stroke-width="1.2"><rect x="0.7" y="0.7" width="14.4" height="10.4" rx="1.4"/><path d="M1 2.6 L7.9 7.2 L14.8 2.6"/></svg>
<svg style="left:271.5px;top:50.5px" width="14" height="16" viewBox="0 0 14 16" fill="none" stroke="#5a96c8" stroke-width="1.2"><path d="M7 1.8 Q11.2 2.2 11.2 7 Q11.2 10.2 12.8 11.8 H1.2 Q2.8 10.2 2.8 7 Q2.8 2.2 7 1.8Z M7 0.4 V1.8"/><path d="M5.6 13.4 Q7 15 8.4 13.4" stroke-width="1.4"/></svg>
<svg style="left:309px;top:50px" width="20" height="17" viewBox="0 0 20 17" fill="none" stroke="#5a96c8" stroke-width="1.2"><path d="M2.7 7.2 L7.7 1.8 L12.4 6.7 L17.4 1.7"/><circle cx="2.7" cy="7.2" r="0.9" fill="#5a96c8" stroke="none"/><circle cx="7.7" cy="1.8" r="0.9" fill="#5a96c8" stroke="none"/><circle cx="17.4" cy="1.7" r="0.9" fill="#5a96c8" stroke="none"/><rect x="1.5" y="11.6" width="2.4" height="3.8" rx="0.6"/><rect x="6.4" y="7.6" width="2.2" height="7.8" rx="0.6"/><rect x="11.4" y="11.4" width="2.2" height="4" rx="0.6"/><rect x="16.1" y="7.6" width="2.2" height="7.8" rx="0.6"/></svg>
<svg style="left:351px;top:52px" width="17" height="13" viewBox="0 0 17 13" fill="none" stroke="#5a96c8" stroke-width="1.2"><path d="M14 2.6 V1.4 Q14 0.7 13.2 0.7 H2.4 Q0.8 0.7 0.8 2.4 V10.6 Q0.8 12.3 2.4 12.3 H14 Q15.6 12.3 15.6 10.6 V4.4 Q15.6 2.8 14 2.8 H2.4"/><circle cx="12.6" cy="7.6" r="0.8" fill="#5a96c8"/></svg>
<svg style="left:397.8px;top:51px" width="17" height="16" viewBox="0 0 17 16" fill="none" stroke="#a9d3f5" stroke-width="1.4"><circle cx="6.7" cy="6" r="5.4"/><path d="M10.6 9.9 L15.4 14.7"/></svg>
<div style="left:0px;top:959px;width:111.3px;height:5px;background:#e95420;"></div>
<div style="left:111.3px;top:959px;width:302.2px;height:5px;background:#efefef;"></div>
<div style="left:232.3px;top:959px;width:0.7px;height:49px;background:#c4c4c4;"></div>
<div style="left:111.3px;top:959px;width:0.7px;height:49px;background:#c4c4c4;"></div>
<div style="left:0px;top:963.9px;width:413.5px;height:0.6px;background:#e9e9e9;"></div>
<div style="left:0px;top:969.2px;width:413.5px;height:0.6px;background:#e9e9e9;"></div>
<div style="left:0px;top:974.3px;width:413.5px;height:0.6px;background:#e9e9e9;"></div>
<div style="left:0px;top:979.5px;width:413.5px;height:0.6px;background:#e9e9e9;"></div>
<div style="left:0px;top:984.7px;width:413.5px;height:0.6px;background:#e9e9e9;"></div>
<div style="left:0px;top:989.9px;width:413.5px;height:0.6px;background:#e9e9e9;"></div>
<div style="left:0px;top:995.0px;width:413.5px;height:0.6px;background:#e9e9e9;"></div>
<div style="left:0px;top:1000.2px;width:413.5px;height:0.6px;background:#e9e9e9;"></div>
<div style="left:0px;top:1005.4px;width:413.5px;height:0.6px;background:#e9e9e9;"></div>
<div style="left:0px;top:979.3px;width:111.5px;height:5.6px;background:transparent;border:0.6px solid #3a3a3a;box-sizing:border-box;"></div>
<div style="left:110.6px;top:983.8px;width:1.6px;height:1.6px;background:#222;"></div>
<div style="left:410px;top:960px;width:3.5px;height:48px;background:#7d7d7d;"></div>
<div style="left:192.5px;top:978.8px;width:13.5px;height:0.6px;background:#ea6a62;"></div>
<div style="left:192.5px;top:983.95px;width:13.5px;height:0.6px;background:#ea6a62;"></div>
<div style="left:192.5px;top:989.1px;width:13.5px;height:0.6px;background:#ea6a62;"></div>
<div style="left:192.5px;top:994.25px;width:13.5px;height:0.6px;background:#ea6a62;"></div>
<div style="left:192.5px;top:999.4px;width:13.5px;height:0.6px;background:#ea6a62;"></div>
<div style="left:192.5px;top:1004.55px;width:13.5px;height:0.6px;background:#ea6a62;"></div>
<div style="left:192.5px;top:1009.7px;width:13.5px;height:0.6px;background:#ea6a62;"></div>
<div style="left:111.9px;top:968.8px;width:10px;height:0.6px;background:#ea6a62;"></div>
<div style="left:232.9px;top:968.8px;width:8px;height:0.6px;background:#ea6a62;"></div>
<div style="left:142px;top:974px;width:18px;height:0.6px;background:#ea6a62;"></div>
<div style="left:162px;top:974px;width:14px;height:0.6px;background:#ea6a62;"></div>
<div style="left:352px;top:974px;width:9px;height:0.6px;background:#ea6a62;"></div>
<div id="tx">
<span style="right:1283px;top:6.00px;font-size:14.2px;line-height:20px;letter-spacing:0.556px;color:#a9a9a9;">foro-na-primere-rutor-python-osint.90708</span>
<span style="right:1124px;top:6.00px;font-size:14.2px;line-height:20px;letter-spacing:0.437px;color:#a9a9a9;">/page-2#post-11942607</span>
<span style="right:1197px;top:75.00px;font-size:15px;line-height:21px;letter-spacing:0.000px;color:#141414;">а постов. Чтобы взять кукисы из браузера заходим в</span>
<span style="right:1201px;top:96.00px;font-size:15px;line-height:21px;letter-spacing:0.000px;color:#141414;">зработчика и смотрим любой запрос в разделе сеть.</span>
<span style="right:1154.2px;top:117.00px;font-size:15px;line-height:21px;letter-spacing:0.000px;color:#141414;">кукисы, как CURL. Далее используем библиотеку uncurl чтобы</span>
<span style="right:1560px;top:138.00px;font-size:15px;line-height:21px;letter-spacing:0.000px;color:#141414;">.</span>
<span style="right:1382.5px;top:159.00px;font-size:15px;line-height:21px;letter-spacing:0.000px;color:#141414;">ваш с браузера запрос&quot;&quot;&quot;))</span>
<span style="right:1467px;top:180.00px;font-size:15px;line-height:21px;letter-spacing:0.000px;color:#141414;">енную cookies.</span>
<span style="right:1406px;top:222.00px;font-size:15px;line-height:21px;letter-spacing:0.000px;color:#141414;"> lxml cssselect requests</span>
<span style="right:1155px;top:330.00px;font-size:15px;line-height:21px;letter-spacing:0.000px;color:#141414;"> библиотеку lxml. Также случайные таймауты. Выводим на</span>
<span style="right:1455px;top:351.00px;font-size:15px;line-height:21px;letter-spacing:0.000px;color:#141414;">айл part_one.csv</span>
<span style="right:1151.7px;top:393.00px;font-size:15px;line-height:21px;letter-spacing:0.000px;color:#141414;">userid id юзера посты которого мы хотим сохранить и готово.</span>
<span style="right:1187.4px;top:414.00px;font-size:15px;line-height:21px;letter-spacing:0.000px;color:#141414;">теме. Если браузер, то порт будет 9150,если демон то</span>
<span style="right:1177px;top:477.00px;font-size:15px;line-height:21px;letter-spacing:0.000px;color:#141414;">датой, названием, и разделом. Переодически нас будет</span>
<span style="right:1184px;top:498.00px;font-size:15px;line-height:21px;letter-spacing:0.000px;color:#141414;">лаго он легко обходится сменой identity tor, учел в коде.</span>
<span style="right:1161px;top:519.00px;font-size:15px;line-height:21px;letter-spacing:0.000px;color:#141414;">огда автоматом. Также выставлены длительные таймауты.</span>
<span style="right:1156px;top:570.00px;font-size:10.67px;line-height:16px;letter-spacing:0.000px;color:#f0f0f0;font-family:'Liberation Mono',monospace;">__init__.py:89: RequestsDependencyWarning: urllib3 (1.26.15) or c</span>
<span style="right:1517px;top:583.00px;font-size:10.67px;line-height:16px;letter-spacing:0.000px;color:#f0f0f0;font-family:'Liberation Mono',monospace;">version!</span>
<span style="right:1362px;top:596.00px;font-size:10.67px;line-height:16px;letter-spacing:0.000px;color:#f0f0f0;font-family:'Liberation Mono',monospace;">({}) doesn&#x27;t match a supported &quot;</span>
<span style="right:1207.5px;top:660.00px;font-size:10.67px;line-height:16px;letter-spacing:0.000px;color:#f0f0f0;font-family:'Liberation Mono',monospace;">qawcdpj2zcbw3sigkn6l3xpad.onion/search/member?user_id=88013</span>
<span style="right:1239.5px;top:673.00px;font-size:10.67px;line-height:16px;letter-spacing:0.000px;color:#f0f0f0;font-family:'Liberation Mono',monospace;">qawcdpj2zcbw3sigkn6l3xpad.onion/search/3385793/?page=2</span>
<span style="right:1239.5px;top:686.00px;font-size:10.67px;line-height:16px;letter-spacing:0.000px;color:#f0f0f0;font-family:'Liberation Mono',monospace;">qawcdpj2zcbw3sigkn6l3xpad.onion/search/3385793/?page=3</span>
<span style="right:1214px;top:699.00px;font-size:10.67px;line-height:16px;letter-spacing:0.000px;color:#f0f0f0;font-family:'Liberation Mono',monospace;">rqawcdpj2zcbw3sigkn6l3xpad.onion/search/3385793/?page=4</span>
<span style="right:1239.5px;top:711.00px;font-size:10.67px;line-height:16px;letter-spacing:0.000px;color:#f0f0f0;font-family:'Liberation Mono',monospace;">qawcdpj2zcbw3sigkn6l3xpad.onion/search/3385793/?page=5</span>
<span style="right:1239.5px;top:724.00px;font-size:10.67px;line-height:16px;letter-spacing:0.000px;color:#f0f0f0;font-family:'Liberation Mono',monospace;">qawcdpj2zcbw3sigkn6l3xpad.onion/search/3385793/?page=6</span>
<span style="right:1239.5px;top:737.00px;font-size:10.67px;line-height:16px;letter-spacing:0.000px;color:#f0f0f0;font-family:'Liberation Mono',monospace;">qawcdpj2zcbw3sigkn6l3xpad.onion/search/3385793/?page=7</span>
<span style="right:1239.5px;top:750.00px;font-size:10.67px;line-height:16px;letter-spacing:0.000px;color:#f0f0f0;font-family:'Liberation Mono',monospace;">qawcdpj2zcbw3sigkn6l3xpad.onion/search/3385793/?page=8</span>
<span style="right:1239.5px;top:763.00px;font-size:10.67px;line-height:16px;letter-spacing:0.000px;color:#f0f0f0;font-family:'Liberation Mono',monospace;">qawcdpj2zcbw3sigkn6l3xpad.onion/search/3385793/?page=9</span>
<span style="right:1233px;top:776.00px;font-size:10.67px;line-height:16px;letter-spacing:0.000px;color:#f0f0f0;font-family:'Liberation Mono',monospace;">qawcdpj2zcbw3sigkn6l3xpad.onion/search/3385793/?page=10</span>
<span style="left:38.6px;top:49.00px;font-size:14.7px;line-height:20px;letter-spacing:0.000px;color:#8fc1ea;">Гарант</span>
<span style="left:527.2px;top:45.00px;font-size:12px;line-height:18px;letter-spacing:0.361px;color:#e3e3e3;-webkit-text-stroke:0.2px;">Элементы</span>
<span style="left:608px;top:45.00px;font-size:12px;line-height:18px;letter-spacing:0.451px;color:#e3e3e3;-webkit-text-stroke:0.2px;">Консоль</span>
<span style="left:678px;top:45.00px;font-size:12px;line-height:18px;letter-spacing:0.745px;color:#e3e3e3;-webkit-text-stroke:0.2px;">Источники</span>
<span style="left:763px;top:45.00px;font-size:12px;line-height:18px;letter-spacing:0.012px;color:#a8c7fa;-webkit-text-stroke:0.2px;">Сеть</span>
<span style="left:810px;top:45.00px;font-size:12px;line-height:18px;letter-spacing:0.503px;color:#e3e3e3;-webkit-text-stroke:0.2px;">Производительность</span>
<span style="left:956px;top:45.00px;font-size:12px;line-height:18px;letter-spacing:0.474px;color:#e3e3e3;-webkit-text-stroke:0.2px;">Память</span>
<span style="left:1021px;top:45.00px;font-size:12px;line-height:18px;letter-spacing:0.559px;color:#e3e3e3;-webkit-text-stroke:0.2px;">Приложение</span>
<span style="left:1117.5px;top:45.00px;font-size:12px;line-height:18px;letter-spacing:0.413px;color:#e3e3e3;-webkit-text-stroke:0.2px;">Конфиденциальность и безопасность</span>
<span style="left:1372px;top:45.00px;font-size:12px;line-height:18px;letter-spacing:0.559px;color:#e3e3e3;-webkit-text-stroke:0.2px;">Lighthouse</span>
<span style="left:1457px;top:45.00px;font-size:12px;line-height:18px;letter-spacing:0.409px;color:#e3e3e3;-webkit-text-stroke:0.2px;">Регистратор</span>
<span style="left:608.7px;top:72.00px;font-size:12px;line-height:18px;letter-spacing:0.252px;color:#e3e3e3;">Сохранять журнал</span>
<span style="left:754px;top:72.00px;font-size:12px;line-height:18px;letter-spacing:0.397px;color:#e3e3e3;">Отключить кеш</span>
<span style="left:858px;top:72.00px;font-size:12px;line-height:18px;letter-spacing:0.397px;color:#e3e3e3;">Без ограничения</span>
<span style="left:485.3px;top:99.00px;font-size:12px;line-height:18px;letter-spacing:0.448px;color:#c7c7c7;">Фильтр</span>
<span style="left:1149.3px;top:99.00px;font-size:12px;line-height:18px;letter-spacing:0.413px;color:#e3e3e3;">Инвертировать</span>
<span style="left:1269.6px;top:99.00px;font-size:12px;line-height:18px;letter-spacing:0.068px;color:#e3e3e3;">Ещё фильтры</span>
<span style="left:1385.3px;top:99.00px;font-size:12px;line-height:18px;letter-spacing:-0.156px;color:#e3e3e3;">Все</span>
<span style="left:1495.9px;top:99.00px;font-size:12px;line-height:18px;letter-spacing:0.488px;color:#e3e3e3;">Документ</span>
<span style="left:1425.2px;top:99.00px;font-size:12px;line-height:18px;letter-spacing:-0.036px;color:#c2e7ff;">Fetch/XHR</span>
<span style="right:1042px;top:124.00px;font-size:9.6px;line-height:15px;letter-spacing:0.164px;color:#e3e3e3;">500 мс</span>
<span style="right:970px;top:124.00px;font-size:9.6px;line-height:15px;letter-spacing:0.121px;color:#e3e3e3;">1 000 мс</span>
<span style="right:899px;top:124.00px;font-size:9.6px;line-height:15px;letter-spacing:0.121px;color:#e3e3e3;">1 500 мс</span>
<span style="right:828px;top:124.00px;font-size:9.6px;line-height:15px;letter-spacing:0.121px;color:#e3e3e3;">2 000 мс</span>
<span style="right:756px;top:124.00px;font-size:9.6px;line-height:15px;letter-spacing:0.121px;color:#e3e3e3;">2 500 мс</span>
<span style="right:685px;top:124.00px;font-size:9.6px;line-height:15px;letter-spacing:0.121px;color:#e3e3e3;">3 000 мс</span>
<span style="right:613px;top:124.00px;font-size:9.6px;line-height:15px;letter-spacing:0.121px;color:#e3e3e3;">3 500 мс</span>
<span style="right:542px;top:124.00px;font-size:9.6px;line-height:15px;letter-spacing:0.121px;color:#e3e3e3;">4 000 мс</span>
<span style="right:470px;top:124.00px;font-size:9.6px;line-height:15px;letter-spacing:0.121px;color:#e3e3e3;">4 500 мс</span>
<span style="right:399px;top:124.00px;font-size:9.6px;line-height:15px;letter-spacing:0.121px;color:#e3e3e3;">5 000 мс</span>
<span style="right:328px;top:124.00px;font-size:9.6px;line-height:15px;letter-spacing:0.121px;color:#e3e3e3;">5 500 мс</span>
<span style="right:256px;top:124.00px;font-size:9.6px;line-height:15px;letter-spacing:0.121px;color:#e3e3e3;">6 000 мс</span>
<span style="right:185px;top:124.00px;font-size:9.6px;line-height:15px;letter-spacing:0.121px;color:#e3e3e3;">6 500 мс</span>
<span style="right:113px;top:124.00px;font-size:9.6px;line-height:15px;letter-spacing:0.121px;color:#e3e3e3;">7 000 мс</span>
<span style="right:42px;top:124.00px;font-size:9.6px;line-height:15px;letter-spacing:0.121px;color:#e3e3e3;">7 500 мс</span>
<span style="left:1554px;top:124.00px;font-size:9.6px;line-height:15px;letter-spacing:0.121px;color:#e3e3e3;">8 000 мс</span>
<span style="left:457.5px;top:206.00px;font-size:12px;line-height:18px;letter-spacing:0.338px;color:#e3e3e3;">Название</span>
<span style="left:474.6px;top:230.00px;font-size:13px;line-height:19px;letter-spacing:0.000px;color:#e3e3e3;font-family:'DejaVu Sans',sans-serif;">⚙</span>
<span style="left:488.4px;top:231.00px;font-size:12px;line-height:18px;letter-spacing:0.271px;color:#e3e3e3;">page-2</span>
<span style="left:475.3px;top:252.00px;font-size:12px;line-height:18px;letter-spacing:0.126px;color:#e3e3e3;">collect?v=2&amp;tid=G-BG8N8DZ50R&amp;gtm=45je5bi1v91719145...%D0%B0&amp;en=page_...</span>
<span style="left:475.3px;top:273.00px;font-size:12px;line-height:18px;letter-spacing:0.235px;color:#e3e3e3;">95679851?wmode=7&amp;page-url=https%3A%2F%2Frutorforum...0-0-0)rqnt(1)aw(1)...</span>
<span style="left:475.3px;top:294.00px;font-size:12px;line-height:18px;letter-spacing:0.235px;color:#e3e3e3;">95892351?wmode=7&amp;page-url=https%3A%2F%2Frutorforum...0-0-0)rqnt(1)aw(1)...</span>
<span style="left:475.3px;top:315.00px;font-size:12px;line-height:18px;letter-spacing:0.259px;color:#e3e3e3;">95937027?wmode=7&amp;page-url=https%3A%2F%2Frutorforum...rqnt(1)aw(1)rcm(1...</span>
<span style="left:475.3px;top:336.00px;font-size:12px;line-height:18px;letter-spacing:0.259px;color:#e3e3e3;">97420157?wmode=7&amp;page-url=https%3A%2F%2Frutorforum...rqnt(1)aw(1)rcm(1...</span>
<span style="left:475.3px;top:357.00px;font-size:12px;line-height:18px;letter-spacing:0.237px;color:#e3e3e3;">101469483?wmode=7&amp;page-url=https%3A%2F%2Frutorforu...rqnt(1)aw(1)rcm(1)...</span>
<span style="left:475.3px;top:378.00px;font-size:12px;line-height:18px;letter-spacing:0.283px;color:#e3e3e3;">95679851?wv-part=5&amp;wv-type=6&amp;wmode=0&amp;wv-hit=562804...c4beehw6f9wkvkr...</span>
<span style="left:475.3px;top:399.00px;font-size:12px;line-height:18px;letter-spacing:0.283px;color:#e3e3e3;">95679851?wv-part=6&amp;wv-type=6&amp;wmode=0&amp;wv-hit=562804...c4beehw6f9wkvkr...</span>
<span style="left:475.3px;top:420.00px;font-size:12px;line-height:18px;letter-spacing:0.283px;color:#e3e3e3;">95679851?wv-part=7&amp;wv-type=6&amp;wmode=0&amp;wv-hit=562804...c4beehw6f9wkvkr...</span>
<span style="left:475.3px;top:441.00px;font-size:12px;line-height:18px;letter-spacing:0.097px;color:#c2e7ff;">collect?v=2&amp;tid=G-B2V7H56K8N&amp;gtm=45je5bi1v91781312...%8B%D0%BD%D0%...</span>
<span style="left:475.3px;top:462.00px;font-size:12px;line-height:18px;letter-spacing:0.064px;color:#e3e3e3;">collect?v=2&amp;tid=G-BG8N8DZ50R&amp;gtm=45je5bi1v91719145..._%D1%82%D0%B5%...</span>
<span style="left:989.2px;top:207.00px;font-size:12px;line-height:18px;letter-spacing:0.589px;color:#a8c7fa;-webkit-text-stroke:0.2px;">Заголовки</span>
<span style="left:1071.3px;top:207.00px;font-size:12px;line-height:18px;letter-spacing:0.455px;color:#e3e3e3;-webkit-text-stroke:0.2px;">Полезная нагрузка</span>
<span style="left:1204px;top:207.00px;font-size:12px;line-height:18px;letter-spacing:0.536px;color:#e3e3e3;-webkit-text-stroke:0.2px;">Предварительный просмотр</span>
<span style="left:1395.5px;top:207.00px;font-size:12px;line-height:18px;letter-spacing:0.259px;color:#e3e3e3;-webkit-text-stroke:0.2px;">Ответ</span>
<span style="left:1450px;top:207.00px;font-size:12px;line-height:18px;letter-spacing:0.637px;color:#e3e3e3;-webkit-text-stroke:0.2px;">Инициатор</span>
<span style="left:1537.5px;top:207.00px;font-size:12px;line-height:18px;letter-spacing:0.469px;color:#e3e3e3;-webkit-text-stroke:0.2px;">Время</span>
<span style="left:960px;top:233.00px;font-size:12px;line-height:18px;letter-spacing:0.331px;color:#e3e3e3;">Общие</span>
<span style="left:960px;top:517.00px;font-size:12px;line-height:18px;letter-spacing:0.365px;color:#e3e3e3;">Заголовки ответов</span>
<span style="left:960px;top:892.00px;font-size:12px;line-height:18px;letter-spacing:0.364px;color:#e3e3e3;">Заголовки запросов</span>
<span style="left:951.2px;top:264.00px;font-size:11.2px;line-height:16px;letter-spacing:0.016px;color:#d0d0d0;">URL Запроса</span>
<span style="left:1203.5px;top:263.00px;font-size:12px;line-height:18px;letter-spacing:0.331px;color:#e3e3e3;">https://region1.google-analytics.com/g/collect?v=2&amp;tid=G-B2V7H56</span>
<span style="left:1203.5px;top:279.00px;font-size:12px;line-height:18px;letter-spacing:0.270px;color:#e3e3e3;">pa=1&amp;dma_cps=syphamo&amp;dma=1&amp;cid=1361324664.1759233186&amp;</span>
<span style="left:1203.5px;top:295.00px;font-size:12px;line-height:18px;letter-spacing:0.079px;color:#e3e3e3;">253FBrand%3B24.0.0.0%7CGoogle%2520Chrome%3B140.0.7339.1</span>
<span style="left:1203.5px;top:311.00px;font-size:12px;line-height:18px;letter-spacing:0.180px;color:#e3e3e3;">=1&amp;tag_exp=103116026~103200004~104527906~104528500~104</span>
<span style="left:1203.5px;top:327.00px;font-size:12px;line-height:18px;letter-spacing:0.260px;color:#e3e3e3;">6217636~116217638&amp;sid=1764487631&amp;sct=92&amp;seg=1&amp;dl=https%3</span>
<span style="left:1203.5px;top:343.00px;font-size:12px;line-height:18px;letter-spacing:0.204px;color:#e3e3e3;">708%2Fpage-2&amp;dr=https%3A%2F%2Frutorforum24.to%2Fsearch%2</span>
<span style="left:1203.5px;top:359.00px;font-size:12px;line-height:18px;letter-spacing:-0.098px;color:#e3e3e3;">D1%83%D1%87%D0%B0%D0%B5%D0%BC%20Xenforo%20%D0%BD</span>
<span style="left:1203.5px;top:375.00px;font-size:12px;line-height:18px;letter-spacing:-0.156px;color:#e3e3e3;">hon%2COSINT)%20%7C%20%D0%A1%D1%82%D1%80%D0%B0%D0</span>
<span style="left:1203.5px;top:391.00px;font-size:12px;line-height:18px;letter-spacing:-0.209px;color:#e3e3e3;">B%D0%B0%D0%B2%D0%BD%D1%8B%D0%B9%20%D1%84%D0%BE</span>
<span style="left:1203.5px;top:407.00px;font-size:12px;line-height:18px;letter-spacing:-0.081px;color:#e3e3e3;">E%20%D1%80%D1%8B%D0%BD%D0%BA%D0%B0&amp;en=page_view&amp;</span>
<span style="left:951.2px;top:428.00px;font-size:11.2px;line-height:16px;letter-spacing:0.228px;color:#d0d0d0;">Метод Запроса</span>
<span style="left:1203.5px;top:427.00px;font-size:12px;line-height:18px;letter-spacing:-0.691px;color:#e3e3e3;">POST</span>
<span style="left:951.2px;top:448.00px;font-size:11.2px;line-height:16px;letter-spacing:0.006px;color:#d0d0d0;">Код Статуса</span>
<span style="left:951.2px;top:468.00px;font-size:11.2px;line-height:16px;letter-spacing:0.167px;color:#d0d0d0;">Удаленный Адрес</span>
<span style="left:1203.5px;top:467.00px;font-size:12px;line-height:18px;letter-spacing:0.118px;color:#e3e3e3;">216.239.34.36:443</span>
<span style="left:951.2px;top:488.00px;font-size:11.2px;line-height:16px;letter-spacing:0.142px;color:#d0d0d0;">Правило Для URL Перехода</span>
<span style="left:1203.5px;top:487.00px;font-size:12px;line-height:18px;letter-spacing:0.419px;color:#e3e3e3;">strict-origin-when-cross-origin</span>
<span style="left:1219.3px;top:447.00px;font-size:12px;line-height:18px;letter-spacing:0.305px;color:#e3e3e3;">204 No Content</span>
<span style="left:951.2px;top:547.00px;font-size:11.2px;line-height:16px;letter-spacing:0.173px;color:#d0d0d0;">Access-Control-Allow-Credentials</span>
<span style="left:1203.5px;top:546.00px;font-size:12px;line-height:18px;letter-spacing:0.699px;color:#e3e3e3;">true</span>
<span style="left:951.2px;top:571.00px;font-size:11.2px;line-height:16px;letter-spacing:0.218px;color:#d0d0d0;">Access-Control-Allow-Origin</span>
<span style="left:1203.5px;top:570.00px;font-size:12px;line-height:18px;letter-spacing:0.684px;color:#e3e3e3;">https://rutorforum24.to</span>
<span style="left:951.2px;top:595.00px;font-size:11.2px;line-height:16px;letter-spacing:-0.080px;color:#d0d0d0;">Alt-Svc</span>
<span style="left:1203.5px;top:594.00px;font-size:12px;line-height:18px;letter-spacing:0.205px;color:#e3e3e3;">h3=&quot;:443&quot;; ma=2592000,h3-29=&quot;:443&quot;; ma=2592000</span>
<span style="left:951.2px;top:619.00px;font-size:11.2px;line-height:16px;letter-spacing:0.173px;color:#d0d0d0;">Cache-Control</span>
<span style="left:1203.5px;top:618.00px;font-size:12px;line-height:18px;letter-spacing:0.295px;color:#e3e3e3;">no-cache, no-store, must-revalidate</span>
<span style="left:951.2px;top:643.00px;font-size:11.2px;line-height:16px;letter-spacing:0.388px;color:#d0d0d0;">Content-Length</span>
<span style="left:1203.5px;top:642.00px;font-size:12px;line-height:18px;letter-spacing:0.188px;color:#e3e3e3;">0</span>
<span style="left:951.2px;top:667.00px;font-size:11.2px;line-height:16px;letter-spacing:0.221px;color:#d0d0d0;">Content-Security-Policy-Report-Only</span>
<span style="left:1203.5px;top:666.00px;font-size:12px;line-height:18px;letter-spacing:0.359px;color:#e3e3e3;">script-src &#x27;none&#x27;; form-action &#x27;none&#x27;; frame-src &#x27;none&#x27;; report-uri ht</span>
<span style="left:951.2px;top:691.00px;font-size:11.2px;line-height:16px;letter-spacing:0.245px;color:#d0d0d0;">Content-Type</span>
<span style="left:1203.5px;top:690.00px;font-size:12px;line-height:18px;letter-spacing:0.570px;color:#e3e3e3;">text/plain</span>
<span style="left:951.2px;top:715.00px;font-size:11.2px;line-height:16px;letter-spacing:0.222px;color:#d0d0d0;">Cross-Origin-Opener-Policy-Report-Only</span>
<span style="left:1203.5px;top:714.00px;font-size:12px;line-height:18px;letter-spacing:0.339px;color:#e3e3e3;">same-origin; report-to=ascnsrsggc:112:0</span>
<span style="left:951.2px;top:739.00px;font-size:11.2px;line-height:16px;letter-spacing:0.125px;color:#d0d0d0;">Cross-Origin-Resource-Policy</span>
<span style="left:1203.5px;top:738.00px;font-size:12px;line-height:18px;letter-spacing:0.358px;color:#e3e3e3;">cross-origin</span>
<span style="left:951.2px;top:763.00px;font-size:11.2px;line-height:16px;letter-spacing:0.289px;color:#d0d0d0;">Date</span>
<span style="left:1203.5px;top:762.00px;font-size:12px;line-height:18px;letter-spacing:0.051px;color:#e3e3e3;">Sun, 30 Nov 2025 07:43:47 GMT</span>
<span style="left:951.2px;top:787.00px;font-size:11.2px;line-height:16px;letter-spacing:0.096px;color:#d0d0d0;">Expires</span>
<span style="left:1203.5px;top:786.00px;font-size:12px;line-height:18px;letter-spacing:-0.039px;color:#e3e3e3;">Fri, 01 Jan 1990 00:00:00 GMT</span>
<span style="left:951.2px;top:811.00px;font-size:11.2px;line-height:16px;letter-spacing:0.312px;color:#d0d0d0;">Pragma</span>
<span style="left:1203.5px;top:810.00px;font-size:12px;line-height:18px;letter-spacing:0.201px;color:#e3e3e3;">no-cache</span>
<span style="left:951.2px;top:835.00px;font-size:11.2px;line-height:16px;letter-spacing:0.201px;color:#d0d0d0;">Report-To</span>
<span style="left:1203.5px;top:834.00px;font-size:12px;line-height:18px;letter-spacing:0.319px;color:#e3e3e3;">{&quot;group&quot;:&quot;ascnsrsggc:112:0&quot;,&quot;max_age&quot;:2592000,&quot;endpoints&quot;:[{&quot;ur</span>
<span style="left:951.2px;top:859.00px;font-size:11.2px;line-height:16px;letter-spacing:0.122px;color:#d0d0d0;">Server</span>
<span style="left:1203.5px;top:858.00px;font-size:12px;line-height:18px;letter-spacing:0.250px;color:#e3e3e3;">Golfe2</span>
<span style="left:951.2px;top:918.00px;font-size:11.2px;line-height:16px;letter-spacing:0.514px;color:#d0d0d0;">:authority</span>
<span style="left:1203.5px;top:917.00px;font-size:12px;line-height:18px;letter-spacing:0.362px;color:#e3e3e3;">region1.google-analytics.com</span>
<span style="left:951.2px;top:938.00px;font-size:11.2px;line-height:16px;letter-spacing:0.562px;color:#d0d0d0;">:method</span>
<span style="left:1203.5px;top:937.00px;font-size:12px;line-height:18px;letter-spacing:-0.691px;color:#e3e3e3;">POST</span>
<span style="left:951.2px;top:958.00px;font-size:11.2px;line-height:16px;letter-spacing:0.444px;color:#d0d0d0;">:path</span>
<span style="left:1203.5px;top:957.00px;font-size:12px;line-height:18px;letter-spacing:0.274px;color:#e3e3e3;">/g/collect?v=2&amp;tid=G-</span>
<span style="left:1203.5px;top:973.00px;font-size:12px;line-height:18px;letter-spacing:0.198px;color:#e3e3e3;">B2V7H56K8N&amp;gtm=45je5bi1v9178131282za200zd9178131282&amp;_p</span>
<span style="left:1203.5px;top:989.00px;font-size:12px;line-height:18px;letter-spacing:0.341px;color:#e3e3e3;">59233186&amp;ul=ru&amp;sr=2560x1440&amp;uaa=x86&amp;uab=64&amp;uafvl=Chromiu</span>
<span style="left:170.5px;top:957.40px;font-size:4.3px;line-height:9px;letter-spacing:0.000px;color:#555;">B</span>
<span style="left:111.9px;top:962.00px;font-size:4.3px;line-height:9px;letter-spacing:-0.197px;color:#222;-webkit-text-stroke:0.12px;">forum</span>
<span style="left:232.9px;top:962.00px;font-size:4.3px;line-height:9px;letter-spacing:0.266px;color:#222;-webkit-text-stroke:0.12px;">text</span>
<span style="left:111.9px;top:967.15px;font-size:4.3px;line-height:9px;letter-spacing:-0.097px;color:#222;-webkit-text-stroke:0.12px;">Форум: ОФФ-с Пьяный Шпонской</span>
<span style="left:232.9px;top:967.15px;font-size:4.3px;line-height:9px;letter-spacing:-0.172px;color:#222;-webkit-text-stroke:0.12px;">Смотрю уже борета конкретно стали путать. Спор был решен в диназ. Сейчас решили продолт</span>
<span style="left:111.9px;top:972.30px;font-size:4.3px;line-height:9px;letter-spacing:-0.170px;color:#222;-webkit-text-stroke:0.12px;">Форум: Вопросы и предложения к команде RuTOR</span>
<span style="left:232.9px;top:972.30px;font-size:4.3px;line-height:9px;letter-spacing:-0.161px;color:#222;-webkit-text-stroke:0.12px;">Недай. Уже заказываю</span>
<span style="left:111.9px;top:977.45px;font-size:4.3px;line-height:9px;letter-spacing:-0.170px;color:#222;-webkit-text-stroke:0.12px;">Форум: Вопросы и предложения к команде RuTOR</span>
<span style="left:232.9px;top:977.45px;font-size:4.3px;line-height:9px;letter-spacing:-0.180px;color:#222;-webkit-text-stroke:0.12px;">Ну только если один подарок, для замазывания...</span>
<span style="left:111.9px;top:982.60px;font-size:4.3px;line-height:9px;letter-spacing:-0.170px;color:#222;-webkit-text-stroke:0.12px;">Форум: Вопросы и предложения к команде RuTOR</span>
<span style="left:232.9px;top:982.60px;font-size:4.3px;line-height:9px;letter-spacing:-0.136px;color:#222;-webkit-text-stroke:0.12px;">Я смотрю опыт прошлых пользователь ни с чему не привел?</span>
<span style="left:111.9px;top:987.75px;font-size:4.3px;line-height:9px;letter-spacing:-0.170px;color:#222;-webkit-text-stroke:0.12px;">Форум: Вопросы и предложения к команде RuTOR</span>
<span style="left:232.9px;top:987.75px;font-size:4.3px;line-height:9px;letter-spacing:-0.156px;color:#222;-webkit-text-stroke:0.12px;">По поводу игр в слова. Если и вправду интересно играть в слова, то предлагаю играть и с вым</span>
<span style="left:111.9px;top:992.90px;font-size:4.3px;line-height:9px;letter-spacing:-0.170px;color:#222;-webkit-text-stroke:0.12px;">Форум: Вопросы и предложения к команде RuTOR</span>
<span style="left:232.9px;top:992.90px;font-size:4.3px;line-height:9px;letter-spacing:-0.135px;color:#222;-webkit-text-stroke:0.12px;">Это не тема для обсуждений. Тут только можете высказать свои предложения!</span>
<span style="left:111.9px;top:998.05px;font-size:4.3px;line-height:9px;letter-spacing:-0.170px;color:#222;-webkit-text-stroke:0.12px;">Форум: Вопросы и предложения к команде RuTOR</span>
<span style="left:232.9px;top:998.05px;font-size:4.3px;line-height:9px;letter-spacing:-0.126px;color:#222;-webkit-text-stroke:0.12px;">Скоро, очень скоро...</span>
<span style="left:111.9px;top:1003.20px;font-size:4.3px;line-height:9px;letter-spacing:-0.170px;color:#222;-webkit-text-stroke:0.12px;">Форум: Вопросы и предложения к команде RuTOR</span>
<span style="left:232.9px;top:1003.20px;font-size:4.3px;line-height:9px;letter-spacing:-0.103px;color:#222;-webkit-text-stroke:0.12px;">А за что положены такие в сообщений сообщений, забыли что-ли?</span>
</div>
<svg style="left:1190px;top:270px" width="250" height="20" viewBox="0 0 250 20"><path d="M3.8 10.2 L20 9.9 L60 9.2 L241.9 7.1 V11.8 L60 14 L20 15 L3.8 15.5Z" fill="#fb0007"/></svg>
</div></body></html>
